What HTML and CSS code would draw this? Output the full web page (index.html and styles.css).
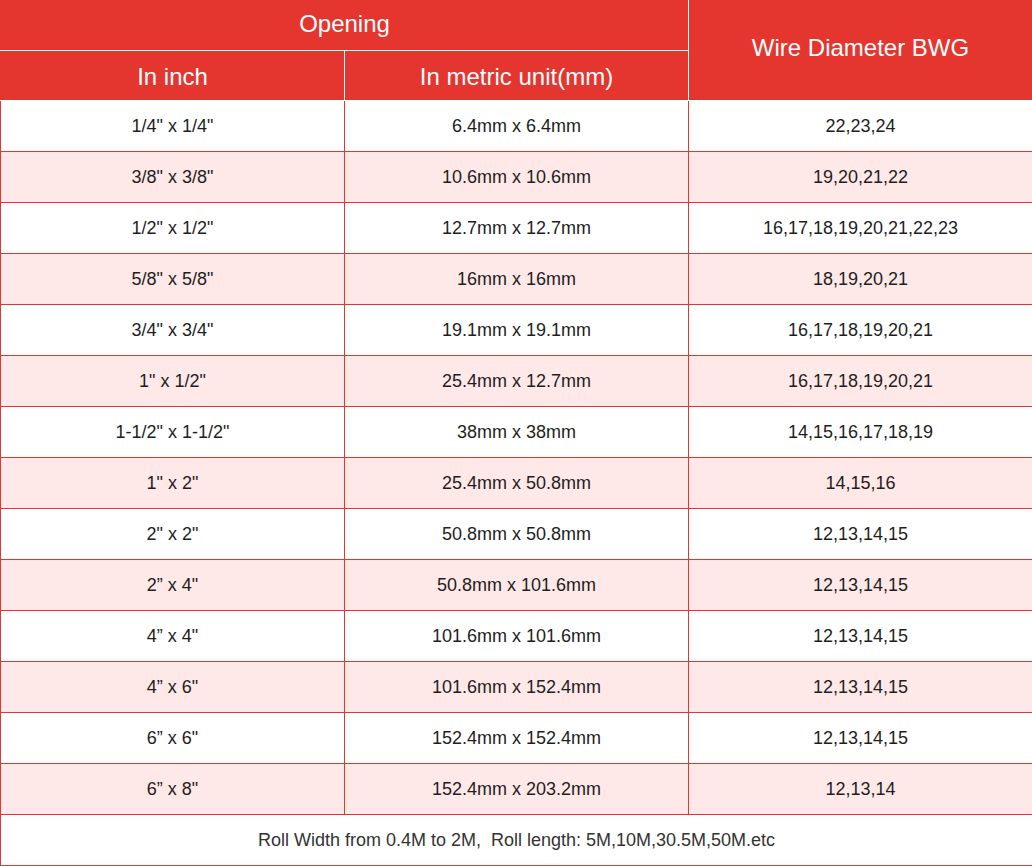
FILE: index.html
```
<!DOCTYPE html>
<html>
<head>
<meta charset="utf-8">
<link rel="stylesheet" href="styles.css">
</head>
<body>
<table class="spec">
  <colgroup>
    <col class="col">
    <col class="col">
    <col class="col">
  </colgroup>
  <thead>
    <tr class="h1">
      <th colspan="2" class="opening">Opening</th>
      <th rowspan="2" class="wire">Wire Diameter BWG</th>
    </tr>
    <tr class="h2">
      <th class="c1">In inch</th>
      <th class="c2">In metric unit(mm)</th>
    </tr>
  </thead>
  <tbody>
    <tr><td>1/4" x 1/4"</td><td>6.4mm x 6.4mm</td><td>22,23,24</td></tr>
    <tr class="alt"><td>3/8" x 3/8"</td><td>10.6mm x 10.6mm</td><td>19,20,21,22</td></tr>
    <tr><td>1/2" x 1/2"</td><td>12.7mm x 12.7mm</td><td>16,17,18,19,20,21,22,23</td></tr>
    <tr class="alt"><td>5/8" x 5/8"</td><td>16mm x 16mm</td><td>18,19,20,21</td></tr>
    <tr><td>3/4" x 3/4"</td><td>19.1mm x 19.1mm</td><td>16,17,18,19,20,21</td></tr>
    <tr class="alt"><td>1" x 1/2"</td><td>25.4mm x 12.7mm</td><td>16,17,18,19,20,21</td></tr>
    <tr><td>1-1/2" x 1-1/2"</td><td>38mm x 38mm</td><td>14,15,16,17,18,19</td></tr>
    <tr class="alt"><td>1" x 2"</td><td>25.4mm x 50.8mm</td><td>14,15,16</td></tr>
    <tr><td>2" x 2"</td><td>50.8mm x 50.8mm</td><td>12,13,14,15</td></tr>
    <tr class="alt"><td>2” x 4"</td><td>50.8mm x 101.6mm</td><td>12,13,14,15</td></tr>
    <tr><td>4” x 4"</td><td>101.6mm x 101.6mm</td><td>12,13,14,15</td></tr>
    <tr class="alt"><td>4” x 6"</td><td>101.6mm x 152.4mm</td><td>12,13,14,15</td></tr>
    <tr><td>6” x 6"</td><td>152.4mm x 152.4mm</td><td>12,13,14,15</td></tr>
    <tr class="alt"><td>6” x 8"</td><td>152.4mm x 203.2mm</td><td>12,13,14</td></tr>
    <tr class="foot"><td colspan="3">Roll Width from 0.4M to 2M,&nbsp; Roll length: 5M,10M,30.5M,50M.etc</td></tr>
  </tbody>
</table>
</body>
</html>
```
FILE: styles.css
```
html, body {
  margin: 0;
  padding: 0;
  background: #ffffff;
}

.spec {
  width: 1032px;
  border-collapse: collapse;
  table-layout: fixed;
  font-family: "Liberation Sans", Arial, sans-serif;
}

.spec .col {
  width: 344px;
}

.spec th {
  background: #e5352f;
  color: #ffffff;
  font-weight: normal;
  font-size: 24px;
  border: 1px solid #ffffff;
  padding: 0;
  text-align: center;
}

.spec .h1 th {
  border-top-color: #e5352f;
}

.spec .opening {
  border-left-color: #e5352f;
  padding-bottom: 4px;
}

.spec .wire {
  border-right-color: #e5352f;
  padding-bottom: 6px;
}

.spec .c1 {
  border-left-color: #e5352f;
  padding-top: 2px;
}

.spec .c2 {
  padding-top: 2px;
}

.spec .h1 {
  height: 50px;
}

.spec .h2 {
  height: 50px;
}

.spec td {
  border: 1px solid #e5352f;
  padding: 0;
  height: 50px;
  text-align: center;
  font-size: 18px;
  color: #1e1e1e;
}

.spec tbody tr {
  height: 51px;
}

.spec .alt td {
  background: #ffe8e8;
}

.spec .foot td {
  color: #333333;
}
```
